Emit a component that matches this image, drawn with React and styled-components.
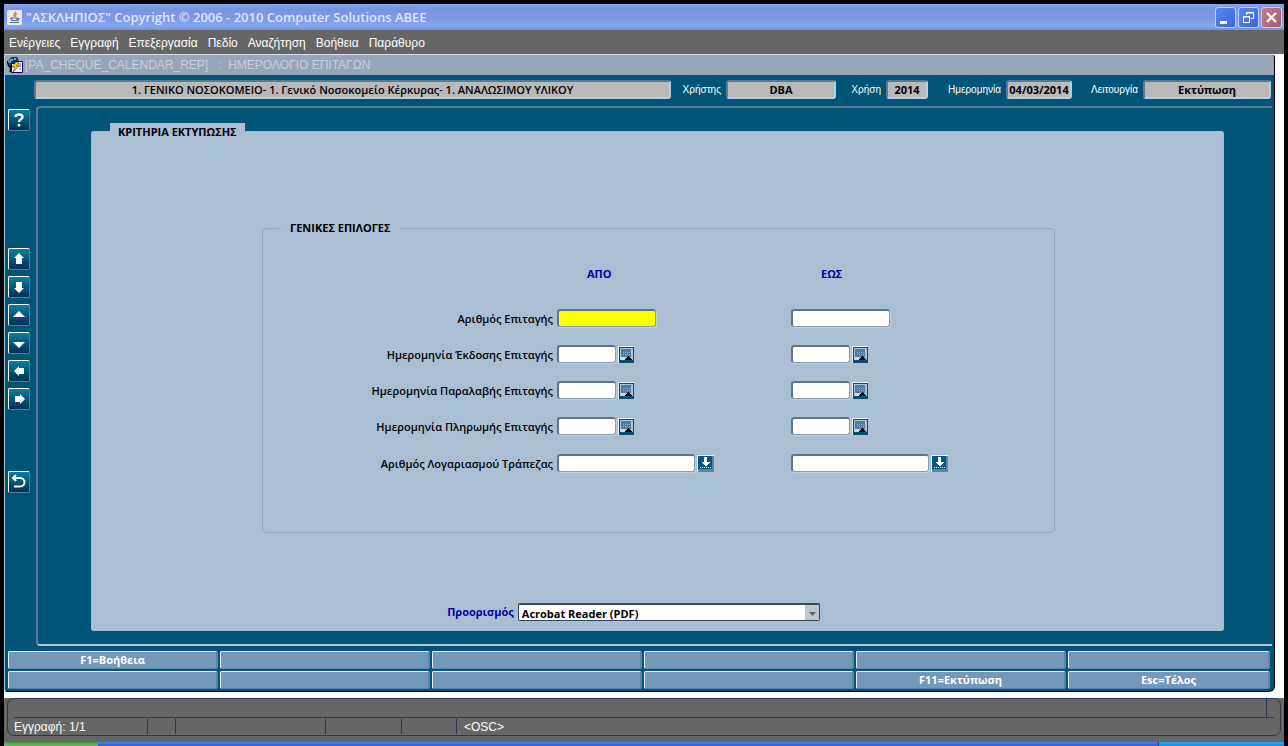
import React from 'react';
import styled, { createGlobalStyle } from 'styled-components';

const GlobalStyle = createGlobalStyle`
  * {
    box-sizing: border-box;
  }

  body {
    margin: 0;
    background: #000;
  }

  button, input, select {
    font: inherit;
    margin: 0;
    padding: 0;
    border-radius: 0;
  }
`;

const uiFont = '"Open Sans", "Noto Sans", sans-serif';
const plainFont = '"Liberation Sans", Arial, sans-serif';

// Application shell
const Screen = styled.div`
  padding: 4px 4px 0;
  background: #000;
  font-family: ${uiFont};
  font-size: 11px;
  line-height: 14px;
`;

const TitleBar = styled.header`
  display: flex;
  align-items: center;
  height: 26px;
  padding: 0 2px 0 3px;
  background: linear-gradient(#86a4f0 0, #7b93e0 20%, #7d9be6 60%, #86a8f0 85%, #7690de 100%);
  color: #dde6fb;
`;

const AppTitle = styled.h1`
  flex: 1;
  margin: 0 0 0 4px;
  font-size: 13px;
  line-height: 18px;
  font-weight: 600;
`;

const WindowButtons = styled.div`
  display: flex;
  gap: 2px;
`;

const WindowButton = styled.button`
  display: flex;
  width: 21px;
  height: 21px;
  border: 1px solid #c3d0f8;
  border-radius: 3px;
  background: ${props => props.$close ? 'linear-gradient(135deg, #c08090, #a85a68)' : 'linear-gradient(135deg, #5f86ee, #3768dc)'};
`;

const MenuBar = styled.nav`
  display: flex;
  gap: 10px;
  height: 24px;
  padding: 6px 5px;
  background: #666;
  font-family: ${plainFont};
  font-size: 12px;
`;

const MenuLink = styled.a`
  color: #fff;
  text-decoration: none;
`;

const Desktop = styled.main`
  padding: 0 9px 6px 0;
  background: #fff;
`;

const FormWindow = styled.section`
  border: 1px solid #000;
  border-top-color: #d8dee4;
  border-left-color: #a9c4d6;
  border-radius: 0 4px 6px 4px;
  background: #005478;
  overflow: hidden;
`;

const FormTitle = styled.h2`
  display: flex;
  align-items: center;
  gap: 2px;
  height: 20px;
  margin: 0;
  padding-left: 2px;
  background: #97a5b8;
  color: #c8ced6;
  font-family: ${plainFont};
  font-size: 12px;
  font-weight: 400;
  white-space: pre;
`;

// Context fields above the form
const InfoBar = styled.div`
  display: flex;
  height: 31px;
  padding: 5px 3px 7px 29px;
`;

const InfoLabel = styled.label`
  width: ${props => props.$width}px;
  padding-right: 5px;
  color: #fff;
  font-family: ${plainFont};
  font-size: 10px;
  line-height: 19px;
  text-align: right;
`;

const InfoField = styled.input`
  flex: ${props => props.$width ? `0 0 ${props.$width}px` : 1};
  min-width: 0;
  width: ${props => props.$width}px;
  height: 19px;
  border: 2px solid #5f7797;
  border-right-color: #b4cfdf;
  border-bottom-color: #b4cfdf;
  border-radius: 3px;
  background: #b9b9b9;
  color: #000;
  font-weight: ${props => props.$width ? 700 : 600};
  text-align: center;
`;

const Body = styled.div`
  display: flex;
  padding-right: 2px;
`;

const SideBar = styled.div`
  display: flex;
  flex-direction: column;
  gap: 6px;
  width: 31px;
  padding: 3px;
`;

const SideButton = styled.button`
  display: flex;
  width: 22px;
  height: 22px;
  margin-top: ${props => props.$before || 0}px;
  border: 1px solid #fff;
  border-right-color: #587ca2;
  border-bottom-color: #587ca2;
  border-radius: 2px;
  background: linear-gradient(#087f9f, #002f56);
`;

const Canvas = styled.div`
  flex: 1;
  padding: 15px 48px 13px 53px;
  border: 2px solid #5c7899;
  border-right: 0;
  border-bottom-color: #b5c4d0;
  border-radius: 4px 0 0 4px;
`;

const Panel = styled.fieldset`
  min-width: 0;
  margin: 0;
  padding: 82px 0 9px 18px;
  border: 1px solid #9fbdd0;
  border-radius: 3px;
  background: #aabfd4;
`;

const PanelLegend = styled.legend`
  padding: 2px 8px 0;
  background: #aabfd4;
  font-weight: 700;
`;

const Group = styled.fieldset`
  width: 793px;
  max-width: 100%;
  margin: 0 auto;
  padding: 13px 0 50px 18px;
  border: 1px solid #8fa6bf;
  border-radius: 5px;
`;

const GroupLegend = styled.legend`
  padding: 0 9px;
  font-weight: 700;
`;

const PanelContent = styled.div`
  margin-left: -16px;
`;

const Criteria = styled.div`
  display: grid;
  grid-template-columns: 276fr 234fr 263fr;
  grid-template-rows: 52px repeat(4, 36px) 38px;
  align-items: center;
`;

const ColumnTitle = styled.span`
  padding-left: 30px;
  color: #0000a0;
  font-weight: 700;
`;

const FieldLabel = styled.label`
  padding: 1px 4px 0 0;
  font-weight: 600;
  text-align: right;
  white-space: nowrap;
`;

const FieldCell = styled.div`
  display: flex;
  align-items: center;
  gap: 2px;
`;

const TextField = styled.input`
  width: ${props => props.$width}px;
  height: 18px;
  border: 2px solid #5f7490;
  border-right: 1px solid #8b9cb0;
  border-bottom: 1px solid #8b9cb0;
  border-radius: 3px;
  box-shadow: 1px 1px 0 #c6cdd4;
  background: ${props => props.$active ? '#ff0' : '#fff'};
  outline: 0;
`;

const PickButton = styled.button`
  display: flex;
  width: 17px;
  height: 17px;
  border: 0;
  background: none;
`;

const Destination = styled.div`
  display: flex;
  justify-content: center;
  align-items: center;
  gap: 4px;
  margin-top: 70px;
  padding-right: 50px;
`;

const DestinationLabel = styled.label`
  color: #0000a0;
  font-weight: 700;
`;

const SelectBox = styled.div`
  position: relative;
  width: 302px;
  height: 18px;
`;

const Select = styled.select`
  display: block;
  appearance: none;
  width: 100%;
  height: 18px;
  padding: 2px 16px 0 3px;
  border: 1px solid #3a4760;
  border-top-width: 2px;
  border-radius: 2px;
  background: #fff;
  color: #000;
  font-weight: 700;
`;

const SelectArrow = styled.svg`
  position: absolute;
  top: 2px;
  right: 1px;
  pointer-events: none;
`;

const FunctionKeys = styled.div`
  display: grid;
  grid-template-columns: repeat(5, 210fr) 202fr;
  grid-auto-rows: 18px;
  gap: 2px;
  padding: 5px 4px 2px 3px;
`;

const FunctionKey = styled.button`
  min-width: 0;
  border: 1px solid #e8f1f6;
  border-right: 2px solid #5f84a6;
  border-bottom-color: #5f84a6;
  border-radius: 2px;
  background: #7498ba;
  color: #fff;
  font-weight: 700;
`;

// Status line and the strip of the taskbar
const StatusBar = styled.footer`
  padding: 0 3px 6px;
  background: #666;
  color: #fff;
  font-family: ${plainFont};
  font-size: 12px;
`;

const StatusFrame = styled.div`
  padding: 0 6px;
  border: 1px solid #2d3850;
  border-radius: 7px;
`;

const MessageLine = styled.div`
  height: 19px;
  padding-right: 7px;
  border-bottom: 1px solid #2d3850;
`;

const MessageArea = styled.div`
  height: 18px;
  border-right: 1px solid #2d3850;
`;

const StatusLine = styled.div`
  display: flex;
  height: 17px;
  padding: 1px 0;
`;

const StatusCell = styled.span`
  flex: ${props => props.$width ? `0 0 ${props.$width}px` : 1};
  padding-left: ${props => props.$width ? 0 : 7}px;
  border-right: ${props => props.$width ? '1px solid #2d3850' : 0};
  line-height: 16px;
`;

const TaskBar = styled.div`
  display: flex;
  height: 4px;
  background: linear-gradient(#4083ee, #2560d8);
`;

const StartEdge = styled.div`
  width: 94px;
  border-radius: 0 3px 0 0;
  background: linear-gradient(#3d9a3d, #72bd6c);
`;

const TrayEdge = styled.div`
  width: 126px;
  margin-left: auto;
  border-left: 1px solid #0c4a9c;
  background: linear-gradient(#2aa8ee, #1290e4);
`;

const JavaIcon = () => (
  <svg width="15" height="15" viewBox="0 0 15 15" aria-hidden="true">
    <rect width="15" height="15" rx="1" fill="#e9e9e6" />
    <path d="M8.500 1.500C9 3.500 5 4.500 7 7M10 3.500C8 4.500 8 5.500 8.500 7" fill="none" stroke="#e07a28" strokeWidth="1.300" />
    <path d="M4 8h6v2.500H5zM10 8.500h2l-1 2H9.500M2.500 12.500h9.500" fill="none" stroke="#55749c" strokeWidth="1.200" />
  </svg>
);

const FormIcon = () => (
  <svg width="16" height="16" viewBox="0 0 16 16" aria-hidden="true">
    <path d="M2 2l3-2h5l2 4v5l-4 3-4-2-2-4z" fill="#103070" />
    <path d="M3 2h3v2H4v2H2zM7 1h2v2H7z" fill="#60b8b8" />
    <path d="M0 4l2 5 3 1M1 8l3 3-1 4" fill="none" stroke="#000" strokeWidth="1.500" />
    <path d="M4.500 6.500h3v-2h8v11h-11z" fill="#fff" stroke="#000080" />
    <path d="M11 7h3M11 9h3M12 12h2" stroke="#c03050" />
    <path d="M9 5l-4 5h3l-2 5 6-6H9l3-4z" fill="#ffe000" stroke="#402020" strokeWidth=".6" />
  </svg>
);

const sideIcons = {
  up: 'M10 4l5 5h-2v6H7V9H5z',
  down: 'M10 16l5-5h-2V5H7v6H5z',
  previous: 'M4 12l6-6 6 6z',
  next: 'M4 9l6 6 6-6z',
  left: 'M5 10l5-5v2h5v6h-5v2z',
  right: 'M16 10l-5-5v2H6v6h5v2z',
};

const SideIcon = ({ name }) => (
  <svg width="20" height="20" viewBox="0 0 20 20" aria-hidden="true">
    {name === 'help' && (
      <path d="M6.500 7C6.500 3.500 13.500 3.500 13.500 7C13.500 9.500 10 9 10 12M10 14v2.500" fill="none" stroke="#fff" strokeWidth="2.500" />
    )}
    {name === 'exit' && (
      <path d="M7 3L4 6l3 3M4 6h7C17 6 17 14.500 11 14.500H5" fill="none" stroke="#fff" strokeWidth="2" />
    )}
    {sideIcons[name] && <path d={sideIcons[name]} fill="#fff" />}
  </svg>
);

const CalendarIcon = () => (
  <svg width="17" height="17" viewBox="0 0 17 17" shapeRendering="crispEdges" aria-hidden="true">
    <path d="M0 0h16v1H1v16H0z" fill="#e4f6fa" />
    <path d="M1 1h15v16H1z" fill="#0b4e72" />
    <path d="M2 2h13v12H2z" fill="#a9c6d8" />
    <path d="M3 3h10v8H3z" fill="#5279a5" />
    <path d="M5 6h1v1H5zM7 6h1v1H7zM9 6h1v1H9zM11 6h1v1h-1zM5 8h1v1H5zM7 8h1v1H7zM9 8h1v1H9zM11 8h1v1h-1z" fill="#8fabc8" />
    <path d="M3 11h4v3H3z" fill="#d8dcda" />
    <path d="M6 14l4-4 4 4z" fill="#000" />
  </svg>
);

const ListIcon = () => (
  <svg width="17" height="17" viewBox="0 0 17 17" shapeRendering="crispEdges" aria-hidden="true">
    <path d="M0 0h17v17H0z" fill="#5d84a8" />
    <path d="M0 0h17v1H1v16H0z" fill="#e4f6fa" />
    <path d="M1 1h14v13H1z" fill="#075877" />
    <path d="M7 2h3v5h3l-4 4h-1L4 7h3z" fill="#fff" />
    <path d="M3 12.500h12" stroke="#fff" strokeDasharray="1 1" />
  </svg>
);

const menuItems = ['Ενέργειες', 'Εγγραφή', 'Επεξεργασία', 'Πεδίο', 'Αναζήτηση', 'Βοήθεια', 'Παράθυρο'];

const infoFields = [
  { id: 'user', label: 'Χρήστης', value: 'DBA', labelWidth: 55, width: 110 },
  { id: 'year', label: 'Χρήση', value: '2014', labelWidth: 50, width: 42 },
  { id: 'date', label: 'Ημερομηνία', value: '04/03/2014', labelWidth: 78, width: 66 },
  { id: 'mode', label: 'Λειτουργία', value: 'Εκτύπωση', labelWidth: 71, width: 128 },
];

const sideButtons = [
  { icon: 'help', title: 'Βοήθεια' },
  { icon: 'up', title: 'Πρώτη εγγραφή', before: 111 },
  { icon: 'down', title: 'Τελευταία εγγραφή' },
  { icon: 'previous', title: 'Προηγούμενη εγγραφή' },
  { icon: 'next', title: 'Επόμενη εγγραφή' },
  { icon: 'left', title: 'Προηγούμενο πεδίο' },
  { icon: 'right', title: 'Επόμενο πεδίο' },
  { icon: 'exit', title: 'Έξοδος', before: 55 },
];

const criteria = [
  { id: 'cheque', label: 'Αριθμός Επιταγής', width: 99 },
  { id: 'issued', label: 'Ημερομηνία Έκδοσης Επιταγής', width: 59, pick: 'calendar' },
  { id: 'received', label: 'Ημερομηνία Παραλαβής Επιταγής', width: 59, pick: 'calendar' },
  { id: 'paid', label: 'Ημερομηνία Πληρωμής Επιταγής', width: 59, pick: 'calendar' },
  { id: 'account', label: 'Αριθμός Λογαριασμού Τράπεζας', width: 138, pick: 'list' },
];

const functionKeys = ['F1=Βοήθεια', '', '', '', '', '', '', '', '', '', 'F11=Εκτύπωση', 'Esc=Τέλος'];

const CriteriaField = ({ id, label, width, pick, active }) => (
  <FieldCell>
    <TextField id={id} aria-label={label} $width={width} $active={active} />
    {pick && (
      <PickButton type="button" aria-label={`Επιλογή: ${label}`}>
        {pick === 'calendar' ? <CalendarIcon /> : <ListIcon />}
      </PickButton>
    )}
  </FieldCell>
);

const App = () => {
  return (
    <Screen>
      <GlobalStyle />
      <TitleBar>
        <JavaIcon />
        <AppTitle>"ΑΣΚΛΗΠΙΟΣ" Copyright © 2006 - 2010 Computer Solutions ΑΒΕΕ</AppTitle>
        <WindowButtons>
          <WindowButton type="button" aria-label="Ελαχιστοποίηση">
            <svg width="19" height="19"><path d="M4 13h7v3H4z" fill="#fff" /></svg>
          </WindowButton>
          <WindowButton type="button" aria-label="Επαναφορά">
            <svg width="19" height="19" fill="none" stroke="#fff">
              <path d="M7.500 7V4.500h7v6H12M7 5h8M4.500 8.500h6v6h-6zM4 9h7" />
            </svg>
          </WindowButton>
          <WindowButton type="button" aria-label="Κλείσιμο" $close>
            <svg width="19" height="19"><path d="M5 5l9 9M14 5l-9 9" stroke="#fff" strokeWidth="2.200" /></svg>
          </WindowButton>
        </WindowButtons>
      </TitleBar>

      <MenuBar>
        {menuItems.map(item => <MenuLink key={item} href="#">{item}</MenuLink>)}
      </MenuBar>

      <Desktop>
        <FormWindow>
          <FormTitle>
            <FormIcon />
            {'[PA_CHEQUE_CALENDAR_REP]   :  ΗΜΕΡΟΛΟΓΙΟ ΕΠΙΤΑΓΩΝ'}
          </FormTitle>

          <InfoBar>
            <InfoField
              readOnly
              aria-label="Μονάδα"
              value="1. ΓΕΝΙΚΟ ΝΟΣΟΚΟΜΕΙΟ- 1. Γενικό Νοσοκομείο Κέρκυρας- 1. ΑΝΑΛΩΣΙΜΟΥ ΥΛΙΚΟΥ"
            />
            {infoFields.map(field => (
              <React.Fragment key={field.id}>
                <InfoLabel htmlFor={field.id} $width={field.labelWidth}>{field.label}</InfoLabel>
                <InfoField id={field.id} readOnly value={field.value} $width={field.width} />
              </React.Fragment>
            ))}
          </InfoBar>

          <Body>
            <SideBar>
              {sideButtons.map(button => (
                <SideButton key={button.icon} type="button" aria-label={button.title} $before={button.before}>
                  <SideIcon name={button.icon} />
                </SideButton>
              ))}
            </SideBar>

            <Canvas>
              <Panel>
                <PanelLegend>ΚΡΙΤΗΡΙΑ ΕΚΤΥΠΩΣΗΣ</PanelLegend>
                <PanelContent>
                  <Group>
                    <GroupLegend>ΓΕΝΙΚΕΣ ΕΠΙΛΟΓΕΣ</GroupLegend>
                    <Criteria>
                      <span />
                      <ColumnTitle>ΑΠΟ</ColumnTitle>
                      <ColumnTitle>ΕΩΣ</ColumnTitle>
                      {criteria.map((row, index) => (
                        <React.Fragment key={row.id}>
                          <FieldLabel htmlFor={`${row.id}-from`}>{row.label}</FieldLabel>
                          <CriteriaField
                            id={`${row.id}-from`}
                            label={`${row.label} από`}
                            width={row.width}
                            pick={row.pick}
                            active={index === 0}
                          />
                          <CriteriaField
                            id={`${row.id}-to`}
                            label={`${row.label} έως`}
                            width={row.width}
                            pick={row.pick}
                          />
                        </React.Fragment>
                      ))}
                    </Criteria>
                  </Group>
                  <Destination>
                    <DestinationLabel htmlFor="destination">Προορισμός</DestinationLabel>
                    <SelectBox>
                      <Select id="destination">
                        <option>Acrobat Reader (PDF)</option>
                      </Select>
                      <SelectArrow width="14" height="15" aria-hidden="true">
                        <path d="M0 0h14v15H0z" fill="#c3c7cb" />
                        <path d="M4 7h7l-3.500 4z" fill="#53688a" />
                      </SelectArrow>
                    </SelectBox>
                  </Destination>
                </PanelContent>
              </Panel>
            </Canvas>
          </Body>

          <FunctionKeys>
            {functionKeys.map((label, index) => (
              <FunctionKey key={index} type="button" aria-label={label || `Πλήκτρο ${index + 1}`}>{label}</FunctionKey>
            ))}
          </FunctionKeys>
        </FormWindow>
      </Desktop>

      <StatusBar>
        <StatusFrame>
          <MessageLine>
            <MessageArea />
          </MessageLine>
          <StatusLine>
            <StatusCell $width={134}>Εγγραφή: 1/1</StatusCell>
            <StatusCell $width={28} />
            <StatusCell $width={150} />
            <StatusCell $width={76} />
            <StatusCell $width={55} />
            <StatusCell>&lt;OSC&gt;</StatusCell>
          </StatusLine>
        </StatusFrame>
      </StatusBar>
      <TaskBar>
        <StartEdge />
        <TrayEdge />
      </TaskBar>
    </Screen>
  );
};

export default App;
